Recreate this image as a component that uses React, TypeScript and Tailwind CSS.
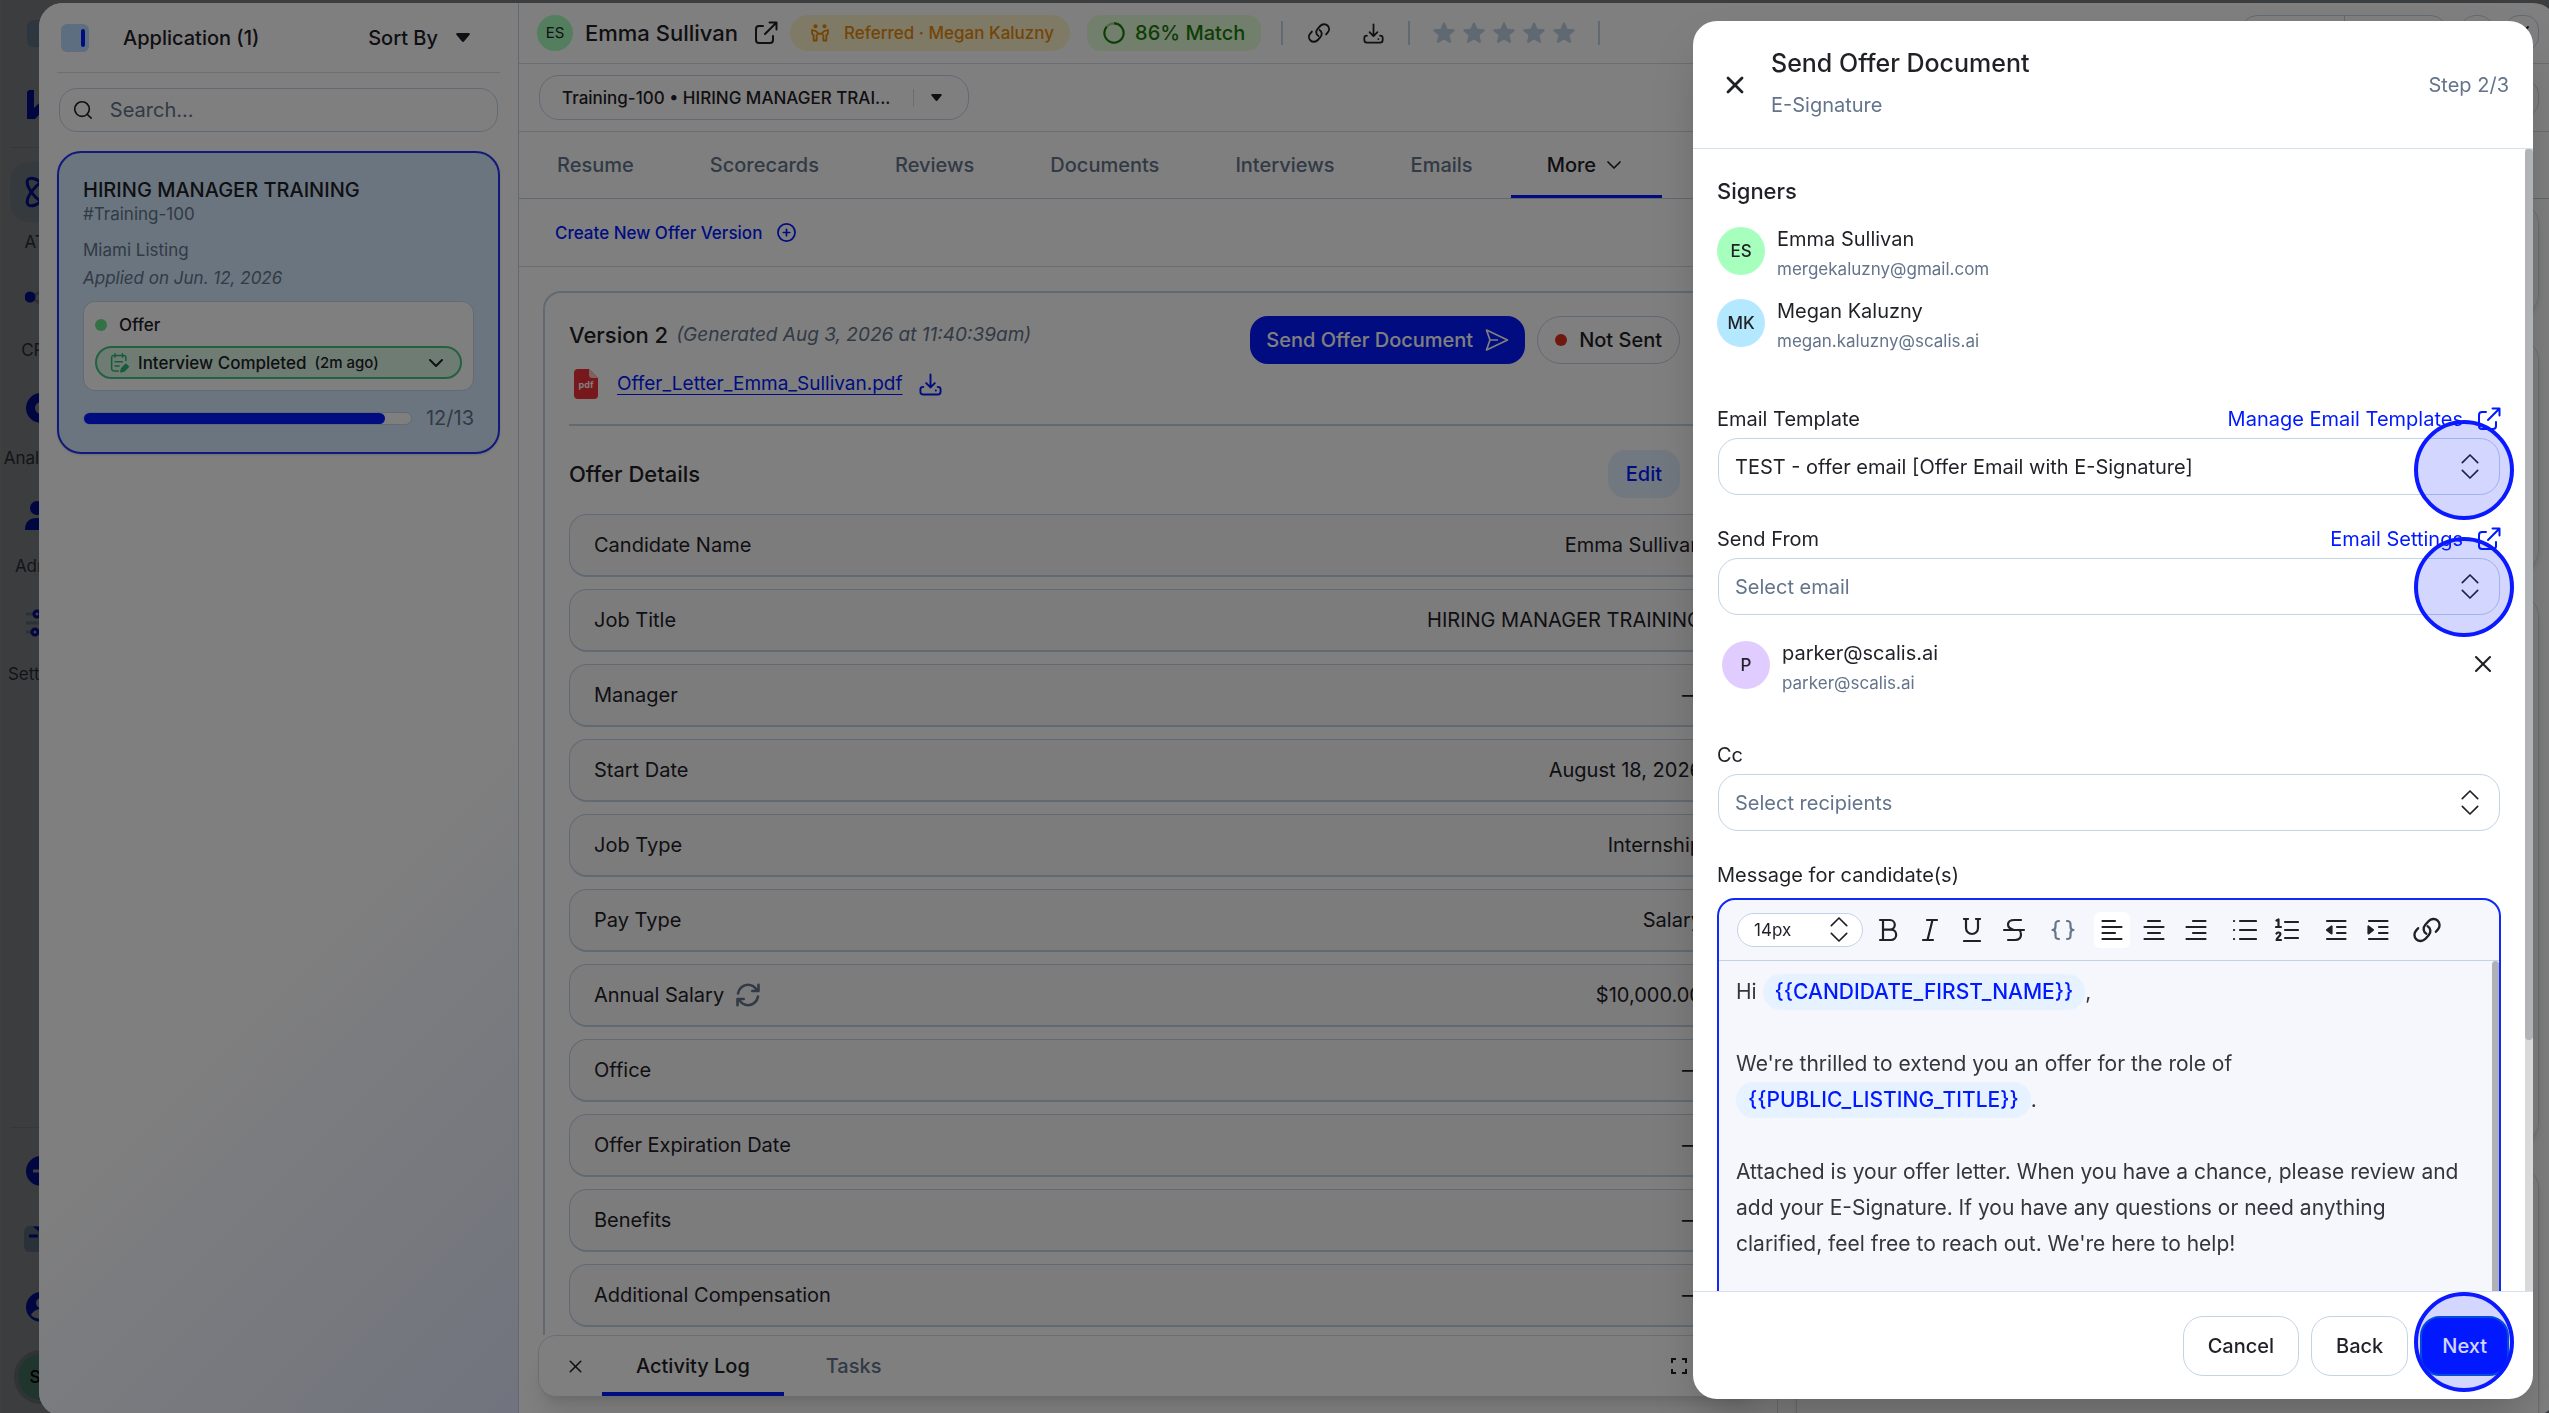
import React from "react";
import { ChevronDown, Search, X } from "lucide-react";

interface IconProps {
  className?: string;
}

interface Detail {
  label: string;
  value: string;
  synced?: boolean;
}

interface Person {
  initials: string;
  name: string;
  email: string;
  color: string;
}

const tabs = ["Resume", "Scorecards", "Reviews", "Documents", "Interviews", "Emails"];

const details: Detail[] = [
  { label: "Candidate Name", value: "Emma Sullivan" },
  { label: "Job Title", value: "HIRING MANAGER TRAINING" },
  { label: "Manager", value: "—" },
  { label: "Start Date", value: "August 18, 2026" },
  { label: "Job Type", value: "Internship" },
  { label: "Pay Type", value: "Salary" },
  { label: "Annual Salary", value: "$10,000.00", synced: true },
  { label: "Office", value: "—" },
  { label: "Offer Expiration Date", value: "—" },
  { label: "Benefits", value: "—" },
  { label: "Additional Compensation", value: "—" },
];

const signers: Person[] = [
  { initials: "ES", name: "Emma Sullivan", email: "mergekaluzny@gmail.com", color: "bg-[#a7ffbe]" },
  { initials: "MK", name: "Megan Kaluzny", email: "megan.kaluzny@scalis.ai", color: "bg-[#b3e8ff]" },
];

/* ---------- icons ---------- */

const ExternalIcon: React.FC<IconProps> = ({ className }) => (
  <svg viewBox="0 0 24 24" fill="none" stroke="currentColor" strokeWidth="2" strokeLinecap="round" strokeLinejoin="round" className={className}>
    <path d="M15.500 1.500h7v7M22.500 1.500 11 13M9 5H5a3 3 0 0 0-3 3v11a3 3 0 0 0 3 3h11a3 3 0 0 0 3-3v-4" />
  </svg>
);

const ChainIcon: React.FC<IconProps> = ({ className }) => (
  <svg viewBox="0 0 24 24" fill="none" stroke="currentColor" strokeWidth="1.900" strokeLinecap="round" strokeLinejoin="round" className={className}>
    <path d="M11.500 15c-2.400-1.300-3-4.700-1-7l2.700-3c2-2.200 5.300-2.400 7.300-.5s2.100 5 .1 7.200l-1.500 1.700" />
    <path d="M12.500 9c2.400 1.300 3 4.700 1 7l-2.700 3c-2 2.200-5.300 2.400-7.300.5s-2.100-5-.1-7.200l1.500-1.700" />
  </svg>
);

const DownloadIcon: React.FC<IconProps> = ({ className }) => (
  <svg viewBox="0 0 24 24" fill="none" stroke="currentColor" strokeWidth="2" strokeLinecap="round" strokeLinejoin="round" className={className}>
    <path d="M12 1.500v13.500M7.500 10.500 12 15l4.500-4.500M4.500 14.500C2.500 14.500 1.500 15.500 1.500 17v2.500c0 2 1 3 3 3h15c2 0 3-1 3-3V17c0-1.500-1-2.500-3-2.500M17.500 18.300h.1" />
  </svg>
);

const StarIcon: React.FC<IconProps> = ({ className }) => (
  <svg viewBox="0 0 24 24" fill="currentColor" className={className}>
    <path d="M12 1.200c.4 0 .8.300 1 .7l2.400 5.900 6.300.5c1 .1 1.400 1.200.6 1.900l-4.800 4.100 1.500 6.300c.2.900-.8 1.600-1.600 1.200L12 18.400l-5.400 3.400c-.8.400-1.800-.3-1.600-1.200l1.500-6.300-4.800-4.100c-.8-.7-.4-1.800.6-1.900l6.300-.5L11 1.900c.2-.4.6-.7 1-.7z" />
  </svg>
);

const CaretIcon: React.FC<IconProps> = ({ className }) => (
  <svg viewBox="0 0 14 9" fill="currentColor" className={className}>
    <path d="M1.500 0h11c1.200 0 1.700 1.200.9 2L8.200 8.300a1.600 1.600 0 0 1-2.400 0L.6 2C-.2 1.200.300 0 1.500 0z" />
  </svg>
);

const SelectorIcon: React.FC<IconProps> = ({ className }) => (
  <svg viewBox="0 0 18 26" fill="none" stroke="currentColor" strokeWidth="1.700" strokeLinecap="round" strokeLinejoin="round" className={className}>
    <path d="m1 9 8-8 8 8M1 17l8 8 8-8" />
  </svg>
);

const SendIcon: React.FC<IconProps> = ({ className }) => (
  <svg viewBox="0 0 24 24" fill="none" stroke="currentColor" strokeWidth="1.700" strokeLinejoin="round" className={className}>
    <path d="M1.500 2 22.500 12 1.500 22 5 12zM5 12h8" />
  </svg>
);

const SyncIcon: React.FC<IconProps> = ({ className }) => (
  <svg viewBox="0 0 24 24" fill="none" stroke="currentColor" strokeWidth="2.600" strokeLinecap="round" strokeLinejoin="round" className={className}>
    <path d="M2 10.500C2.800 5.500 7 1.800 12 1.800c4 0 7 2.200 9 5.500M22.500 1.800v6.200h-6.200M22 13.500c-.8 5-5 8.700-10 8.700-4 0-7-2.200-9-5.500M1.500 22.200V16h6.200" />
  </svg>
);

const ReferIcon: React.FC<IconProps> = ({ className }) => (
  <svg viewBox="0 0 24 24" fill="none" stroke="currentColor" strokeWidth="2.400" strokeLinecap="round" strokeLinejoin="round" className={className}>
    <circle cx="6" cy="3" r="1.600" fill="currentColor" />
    <circle cx="18" cy="3" r="1.600" fill="currentColor" />
    <path d="M1.500 8v5l2 2v7h4v-7M1.500 8l5 1.500L9 12M22.500 8v5l-2 2v7h-4v-7M22.500 8l-5 1.500L15 12M9 13h6" />
  </svg>
);

const CalendarEditIcon: React.FC<IconProps> = ({ className }) => (
  <svg viewBox="0 0 24 24" fill="none" stroke="currentColor" strokeWidth="1.800" strokeLinecap="round" strokeLinejoin="round" className={className}>
    <path d="M10 21.500H4.500a2.500 2.500 0 0 1-2.500-2.500V5.500A2.500 2.500 0 0 1 4.500 3h12A2.500 2.500 0 0 1 19 5.500V9M6 1v4M15 1v4M6 10.500h9M6 15.500h5" />
    <path d="m13 22.500 1-4 5-5 3 3-5 5z" fill="currentColor" />
  </svg>
);

const PdfIcon: React.FC<IconProps> = ({ className }) => (
  <svg viewBox="0 0 24 30" className={className}>
    <path d="M4 0h11l9 9v17a4 4 0 0 1-4 4H4a4 4 0 0 1-4-4V4a4 4 0 0 1 4-4z" fill="#ef3038" />
    <path d="M15 0v6a3 3 0 0 0 3 3h6z" fill="#ffc2c4" />
    <text x="12" y="19" textAnchor="middle" fontSize="9" fontWeight="700" fontFamily="Inter, sans-serif" fill="#fff">pdf</text>
  </svg>
);

const FullscreenIcon: React.FC<IconProps> = ({ className }) => (
  <svg viewBox="0 0 16 16" fill="none" stroke="currentColor" strokeWidth="2" className={className}>
    <path d="M1 5V1h4M11 1h4v4M15 11v4h-4M5 15H1v-4" />
  </svg>
);

/* toolbar glyphs share a 24px box */
const ToolIcon: React.FC<{ children: React.ReactNode; className?: string }> = ({ children, className }) => (
  <svg viewBox="0 0 24 24" fill="none" stroke="currentColor" strokeWidth="2.200" strokeLinecap="round" strokeLinejoin="round" className={className}>
    {children}
  </svg>
);

const toolGroups: { name: string; icon: React.ReactNode; active?: boolean; muted?: boolean }[][] = [
  [
    { name: "Bold", icon: <path d="M4 2h10a4.800 4.800 0 0 1 0 9.600H7M7 2v20M4 22h11a5.200 5.200 0 0 0 0-10.400" /> },
    { name: "Italic", icon: <path d="M9 2h10M5 22h10M14.500 2l-5 20" /> },
    { name: "Underline", icon: <path d="M4 1h4M16 1h4M6 1v9a6 6 0 0 0 12 0V1M4 23h16" /> },
    { name: "Strikethrough", icon: <path d="M19 2h-6.500C8.500 2 6 3.500 6 6.500S8.500 11 12 12M2 12h20M17.500 12c1 1 1.500 2.500 1.500 4.500 0 3.500-2 5.500-6 5.500H6" /> },
  ],
  [
    { name: "Insert variable", muted: true, icon: <path d="M8 3c-3 0-3.500 1-3.500 3.500v2C4.500 10.500 3.500 12 1.500 12c2 0 3 1.500 3 3.500v2C4.500 20 5 21 8 21M16 3c3 0 3.500 1 3.500 3.500v2c0 2 1 3.500 3 3.500-2 0-3 1.500-3 3.500v2c0 2.500-.5 3.500-3.500 3.500" /> },
  ],
  [
    { name: "Align left", active: true, icon: <path d="M2.500 3H15M2.500 9h19M2.500 15H15M2.500 21h19" /> },
    { name: "Align center", icon: <path d="M6 3h12M2.500 9h19M6 15h12M2.500 21h19" /> },
    { name: "Align right", icon: <path d="M9 3h12.500M2.500 9h19M9 15h12.500M2.500 21h19" /> },
  ],
  [
    { name: "Bulleted list", icon: <path d="M7 3h16M7 12h16M7 21h16M1 3h.1M1 12h.1M1 21h.1" /> },
    { name: "Numbered list", icon: <path d="M10 4h13M10 12h13M10 20h13M1.500 2.500l2-1V9M1 9h5M1.500 15.500c1-1.500 4-1.300 4 .5 0 2-4 4-4 6H6" /> },
  ],
  [
    { name: "Outdent", icon: <><path d="M3 3h18.500M13 9h8.500M13 15h8.500M3 21h18.500" /><path d="M7.500 8.500v7L3 12z" fill="currentColor" /></> },
    { name: "Indent", icon: <><path d="M3 3h18.500M13 9h8.500M13 15h8.500M3 21h18.500" /><path d="M2.500 8.500v7L7 12z" fill="currentColor" /></> },
  ],
];

/* ---------- shared bits ---------- */

const PersonRow: React.FC<{ person: Person }> = ({ person }) => (
  <div className="flex items-start gap-3">
    <span className={`${person.color} flex size-12 items-center justify-center rounded-full text-[17px] font-medium`}>
      {person.initials}
    </span>
    <div className="flex flex-col gap-[6px] leading-6">
      <span>{person.name}</span>
      <span className="text-[17px] text-[#64748b]">{person.email}</span>
    </div>
  </div>
);

const ClickRing: React.FC<IconProps> = ({ className }) => (
  <span className={`pointer-events-none absolute size-[100px] rounded-full border-4 border-[#0a19ff] bg-[#0a19ff]/18 ${className}`} />
);

interface FieldProps {
  id: string;
  label: string;
  value: string;
  link?: string;
  filled?: boolean;
  ring?: string;
}

const SelectField: React.FC<FieldProps> = ({ id, label, value, link, filled, ring }) => (
  <div>
    <div className="flex h-6 items-center justify-between">
      <label htmlFor={id}>{label}</label>
      {link && (
        <a href="#" className="flex items-center gap-[14px] text-[#0019ff]">
          {link}
          <ExternalIcon className="size-6" />
        </a>
      )}
    </div>
    <div className="relative mx-px mt-[7px]">
      <select
        id={id}
        className={`h-[57px] w-full appearance-none rounded-[20px] border border-[#c3d3e6] bg-white px-4 ${filled ? "text-[#1f2126]" : "text-[#64748b]"}`}
      >
        <option>{value}</option>
      </select>
      <SelectorIcon className="pointer-events-none absolute top-4 right-[21px] h-[25px] w-[18px]" />
      {ring && <ClickRing className={ring} />}
    </div>
  </div>
);

/* ---------- left rail ---------- */

const railItems: { label: string; icon: React.ReactNode; active?: boolean }[] = [
  {
    label: "ATS",
    active: true,
    icon: (
      <g fill="none" stroke="#0019ff" strokeWidth="3">
        <ellipse cx="16" cy="16" rx="18" ry="7.500" transform="rotate(45 16 16)" />
        <ellipse cx="16" cy="16" rx="18" ry="7.500" transform="rotate(-45 16 16)" />
      </g>
    ),
  },
  {
    label: "CRM",
    icon: <><path d="M5 13 28 2M5 13l23 14" stroke="#a9c4e0" strokeWidth="3" /><circle cx="5" cy="13" r="5.500" fill="#0019ff" /></>,
  },
  { label: "Analytics", icon: <circle cx="16" cy="16" r="10.500" fill="none" stroke="#0019ff" strokeWidth="9" /> },
  {
    label: "Admin",
    icon: <><circle cx="12" cy="8" r="7" fill="#0019ff" /><path d="M0 30c0-8 4-12 12-12s12 4 12 12z" fill="#0019ff" /></>,
  },
  {
    label: "Settings",
    icon: <><path d="M1 6h30M1 15h30M1 24h30" stroke="#a9c4e0" strokeWidth="3" /><circle cx="12" cy="6" r="3" fill="#fff" stroke="#0019ff" strokeWidth="3" /><circle cx="10" cy="24" r="3" fill="#fff" stroke="#0019ff" strokeWidth="3" /></>,
  },
];

const Rail: React.FC = () => (
  <nav className="flex h-full w-20 flex-col items-center border-l border-white bg-[#f3f5fb] text-[17px] text-[#4b5563]">
    <span className="mt-5 size-[27px] rounded-md bg-[#b8dcff]" />
    <svg viewBox="0 0 28 30" className="mt-[43px] h-[30px] w-7">
      <path d="M2 0h5v18L26 0v10L8 29H0V2z" fill="#0019ff" />
    </svg>
    <div className="mt-[27px] h-px w-[62px] bg-[#d5e1ef]" />
    <ul className="mt-[14px] flex flex-col gap-6">
      {railItems.map((item) => (
        <li key={item.label} className="flex h-[84px] flex-col items-center">
          <span className={`flex h-[60px] w-[62px] shrink-0 items-center justify-center rounded-[20px] ${item.active ? "bg-[#d5e8fb]" : ""}`}>
            <svg viewBox="0 0 32 32" className="size-8">{item.icon}</svg>
          </span>
          <span className="mt-2 leading-6">{item.label}</span>
        </li>
      ))}
    </ul>
    <div className="mt-auto h-px w-[62px] bg-[#d5e1ef]" />
    <svg viewBox="0 0 32 32" className="mt-[27px] size-8">
      <circle cx="16" cy="16" r="15" fill="#0019ff" />
      <path d="M8 16h16M16 8v16" stroke="#fff" strokeWidth="3" />
    </svg>
    <svg viewBox="0 0 34 26" className="mt-[39px] h-[26px] w-[34px]">
      <rect width="34" height="26" rx="6" fill="#a9c4e0" />
      <path d="M5 10h9M13 2h16v4H18z" fill="#0019ff" stroke="#0019ff" strokeWidth="3" />
    </svg>
    <svg viewBox="0 0 32 32" className="mt-[39px] size-8">
      <circle cx="16" cy="16" r="15" fill="#0019ff" />
      <circle cx="16" cy="12" r="5" fill="#fff" />
      <path d="M6 24c4-8 16-8 20 0-4 5-16 5-20 0z" fill="#fff" />
    </svg>
    <span className="mt-[27px] mb-[9px] flex size-[54px] items-center justify-center rounded-full border-4 border-[#c9cdd5] bg-[#7fd6b8] font-medium text-black">
      SP
    </span>
  </nav>
);

/* ---------- application list ---------- */

const ApplicationList: React.FC = () => (
  <aside className="w-[480px] shrink-0 border-r border-[#c3d3e6] bg-[linear-gradient(135deg,#fff_62%,#e2e8fc_100%)] px-[18px]">
    <div className="flex h-[70px] items-center border-b border-[#d5e1ef] pr-[30px] pl-1">
      <button aria-label="Collapse list" className="flex size-7 items-center justify-end rounded-md bg-[#b8dcff] pr-1">
        <span className="h-[18px] w-1 rounded-full bg-[#0019ff]" />
      </button>
      <h2 className="ml-[34px] font-medium">Application (1)</h2>
      <button className="ml-auto flex items-center gap-[18px] font-medium">
        Sort By
        <CaretIcon className="h-[9px] w-[14px]" />
      </button>
    </div>

    <label className="mx-[2px] mt-[15px] flex h-11 items-center gap-4 rounded-[18px] border border-[#c3d3e6] pl-3">
      <Search className="size-6" strokeWidth={1.8} />
      <input
        type="search"
        aria-label="Search applications"
        placeholder="Search..."
        className="w-full bg-transparent outline-none placeholder:text-[#64748b]"
      />
    </label>

    <article className="mt-[19px] h-[303px] rounded-3xl border-2 border-[#1e35f5] bg-[#d5ebff] px-6 pt-[25px] shadow-sm">
      <h3 className="leading-6 font-medium">HIRING MANAGER TRAINING</h3>
      <p className="text-[17px] leading-6 text-[#64748b]">#Training-100</p>
      <p className="mt-3 text-[17px] leading-6 text-[#64748b]">Miami Listing</p>
      <p className="mt-1 text-[17px] leading-6 text-[#64748b] italic">Applied on Jun. 12, 2026</p>

      <div className="mt-[11px] rounded-xl border border-[#c9d3e4] bg-white p-[11px] text-[17px] font-medium">
        <div className="flex items-center gap-3 leading-6">
          <span className="size-3 rounded-full bg-[#66e38c]" />
          Offer
        </div>
        <button className="mt-[9px] flex h-[33px] w-full items-center rounded-full border-2 border-[#45c583] bg-[#dcf9e7] pr-3 pl-[13px]">
          <CalendarEditIcon className="mr-2 size-5 text-[#2eb872]" />
          Interview Completed
          <span className="ml-2 text-[15px]">(2m ago)</span>
          <ChevronDown className="ml-auto size-6" />
        </button>
      </div>

      <div className="mt-[11px] flex items-center gap-[14px] text-[#64748b]">
        <div className="h-[13px] flex-1 rounded-full border border-[#c9d3e4] bg-white">
          <div className="h-full w-[92%] rounded-full bg-[#0019ff]" />
        </div>
        12/13
      </div>
    </article>
  </aside>
);

/* ---------- candidate profile ---------- */

const Divider = () => <span className="h-6 w-[2px] bg-[#c3d3e6]" />;

const ProfileHeader: React.FC = () => (
  <header>
    <div className="flex h-[61px] items-center border-b border-[#d5dde9] pr-[18px] pl-[18px]">
      <span className="flex size-9 items-center justify-center rounded-full bg-[#a7ffbe] text-[15px]">ES</span>
      <h1 className="ml-3 text-[22px] font-medium">Emma Sullivan</h1>
      <ExternalIcon className="ml-4 size-6" />
      <span className="ml-3 flex h-9 items-center gap-[15px] rounded-full bg-[#fff5cc] pr-4 pl-[21px] text-[17px] font-medium text-[#e8890c]">
        <ReferIcon className="size-[18px]" />
        Referred · Megan Kaluzny
      </span>
      <span className="ml-[17px] flex h-9 items-center gap-[10px] rounded-[14px] bg-[#e3ffd9] px-4 font-medium text-[#1c7a0c]">
        <svg viewBox="0 0 24 24" fill="none" stroke="currentColor" strokeWidth="2.200" className="size-[22px]">
          <circle cx="12" cy="12" r="10.500" opacity="0.350" />
          <path d="M12 1.500A10.500 10.500 0 1 1 4 5.200" />
        </svg>
        86% Match
      </span>
      <div className="ml-5 flex items-center gap-6">
        <Divider />
        <button aria-label="Copy link"><ChainIcon className="size-6" /></button>
        <button aria-label="Download" className="ml-2"><DownloadIcon className="size-[21px]" /></button>
        <Divider />
      </div>
      <div className="mx-[22px] flex gap-[6px] text-[#c0d0e3]">
        {[1, 2, 3, 4, 5].map((n) => (
          <StarIcon key={n} className="size-6" />
        ))}
      </div>
      <Divider />
      <div className="ml-auto flex h-9 w-[206px] divide-x divide-[#c3d3e6] rounded-[16px] border border-[#c3d3e6]">
        <span className="flex-1" />
        <span className="flex-1" />
      </div>
      <span className="ml-[14px] h-9 w-8 rounded-[14px] border border-[#c3d3e6]" />
      <button aria-label="Close profile" className="ml-3 flex h-9 w-[34px] items-center justify-center rounded-[14px] border border-[#c3d3e6]">
        <X className="size-6" />
      </button>
    </div>

    <div className="flex h-[68px] items-center justify-between border-b border-[#d5dde9] pr-[18px] pl-5">
      <button className="flex h-[45px] w-[430px] items-center rounded-[20px] border border-[#c3d3e6] pr-[26px] pl-[22px] text-[17px] font-medium">
        Training-100 • HIRING MANAGER TRAI...
        <span className="ml-auto h-[18px] w-px bg-[#d5dde9]" />
        <CaretIcon className="ml-[17px] h-[7px] w-[11px]" />
      </button>
      <span className="h-9 w-[200px] rounded-[14px] border border-[#c3d3e6]" />
    </div>

    <nav className="flex h-[67px] items-stretch border-b border-[#c3cfe0] font-medium text-[#64748b]">
      {tabs.map((tab) => (
        <button key={tab} className="px-[38px]">{tab}</button>
      ))}
      <button className="flex items-center gap-[6px] border-b-[3px] border-[#0019ff] px-9 pt-[3px] text-[#1f2126]">
        More
        <ChevronDown className="size-6" strokeWidth={1.7} />
      </button>
    </nav>
  </header>
);

const OfferVersion: React.FC = () => (
  <section className="rounded-[18px] border-2 border-[#c3d3e6] px-6 pt-[23px]">
    <div className="flex items-start justify-between pr-[47px]">
      <div>
        <div className="flex h-[38px] items-center gap-2">
          <h2 className="text-[22px] font-medium">Version 2</h2>
          <span className="text-[19px] text-[#64748b] italic">(Generated Aug 3, 2026 at 11:40:39am)</span>
        </div>
        <div className="mt-[14px] flex h-8 items-center pl-[5px] text-[#0019ff]">
          <PdfIcon className="h-[30px] w-6" />
          <a href="#" className="ml-[19px] text-[19px] underline underline-offset-4">Offer_Letter_Emma_Sullivan.pdf</a>
          <button aria-label="Download offer letter" className="ml-4"><DownloadIcon className="size-[23px]" /></button>
        </div>
      </div>
      <div className="flex gap-3">
        <button className="flex h-12 items-center gap-3 rounded-[18px] bg-[#0019ff] px-4 font-medium text-white">
          Send Offer Document
          <SendIcon className="size-6" />
        </button>
        <span className="flex h-12 items-center gap-3 rounded-full border border-[#c3d3e6] px-[17px] font-medium">
          <span className="size-3 rounded-full bg-[#e0301e]" />
          Not Sent
        </span>
      </div>
    </div>

    <hr className="mt-6 border-t-2 border-[#c3d3e6]" />

    <div className="mt-6 flex h-12 items-center justify-between pr-[47px]">
      <h2 className="text-[22px] font-medium">Offer Details</h2>
      <button className="h-12 rounded-[18px] bg-[#e3f1ff] px-[18px] font-medium text-[#0019ff]">Edit</button>
    </div>

    <dl className="mt-4 flex flex-col gap-3 pb-6">
      {details.map((item) => (
        <div key={item.label} className="flex h-[63px] items-center justify-between rounded-[18px] border border-b-2 border-[#c3d3e6] bg-[#f8f8fb] px-6">
          <dt className="flex items-center gap-3">
            {item.label}
            {item.synced && <SyncIcon className="size-6 text-[#64748b]" />}
          </dt>
          <dd>{item.value}</dd>
        </div>
      ))}
    </dl>
  </section>
);

const Profile: React.FC = () => (
  <div className="flex min-w-0 flex-1 flex-col">
    <ProfileHeader />
    <div className="flex min-h-0 flex-1">
      <main className="flex min-w-0 flex-1 flex-col">
        <div className="flex h-[68px] shrink-0 items-center border-b border-[#d5dde9] pl-9">
          <button className="flex items-center gap-[15px] text-[17px] font-medium text-[#0019ff]">
            Create New Offer Version
            <svg viewBox="0 0 24 24" fill="none" stroke="currentColor" strokeWidth="2.200" strokeLinecap="round" className="size-[19px]">
              <circle cx="12" cy="12" r="10.800" />
              <path d="M12 8v8M8 12h8" />
            </svg>
          </button>
        </div>
        <div className="min-h-0 flex-1 overflow-hidden px-6 pt-6">
          <OfferVersion />
        </div>
        <div className="mx-[19px] mb-[19px] flex h-[62px] shrink-0 items-stretch rounded-[18px] border border-[#d5dde9] bg-white pr-[70px] pl-[26px] font-medium shadow-xl">
          <button aria-label="Close activity log"><X className="size-[21px]" strokeWidth={1.8} /></button>
          <button className="ml-4 border-b-4 border-[#0019ff] px-[34px] pt-1">Activity Log</button>
          <button className="ml-2 px-[34px] text-[#64748b]">Tasks</button>
          <button aria-label="Full screen" className="ml-auto"><FullscreenIcon className="size-4" /></button>
        </div>
      </main>
      <aside className="flex w-[780px] shrink-0 flex-col gap-7 overflow-hidden border-l border-[#d5dde9] px-[18px] pt-[6px]">
        <div className="h-[108px] shrink-0 rounded-[18px] border border-[#d5dde9] shadow-md" />
        <div className="h-[228px] shrink-0 rounded-[18px] border border-[#d5dde9] shadow-md" />
        <div className="h-[544px] shrink-0 rounded-[18px] border border-[#d5dde9] shadow-md" />
        <div className="h-[300px] shrink-0 rounded-[18px] border border-[#d5dde9] shadow-md" />
      </aside>
    </div>
  </div>
);

/* ---------- send offer drawer ---------- */

const Chip: React.FC<{ children: React.ReactNode }> = ({ children }) => (
  <span className="inline-block rounded-full bg-[#e6f2ff] px-3 font-medium text-[#0019ff]">{children}</span>
);

const MessageEditor: React.FC = () => (
  <div className="mt-[11px] h-[560px] overflow-hidden rounded-[18px] border-2 border-[#0f2bf5] bg-[#f5f7fc]">
    <div className="flex h-[61px] items-center gap-[7px] border-b border-[#c3d3e6] pl-[18px]">
      <div className="relative">
        <select aria-label="Font size" className="h-[34px] w-[126px] appearance-none rounded-full border border-[#c3d3e6] bg-white pl-4 text-[17px]">
          <option>14px</option>
        </select>
        <SelectorIcon className="pointer-events-none absolute top-1 right-[15px] h-[25px] w-[18px]" />
      </div>
      <div className="flex gap-[13px]">
        {toolGroups.map((group, index) => (
          <div key={index} className="flex gap-[6px]">
            {group.map((tool) => (
              <button
                key={tool.name}
                aria-label={tool.name}
                className={`flex size-9 items-center justify-center rounded-md ${tool.active ? "bg-white" : ""} ${tool.muted ? "text-[#64748b]" : ""}`}
              >
                <ToolIcon className="size-6">{tool.icon}</ToolIcon>
              </button>
            ))}
          </div>
        ))}
        <button aria-label="Insert link" className="flex size-9 items-center justify-center">
          <ChainIcon className="size-[30px]" />
        </button>
      </div>
    </div>
    <div className="flex h-[497px] justify-between">
      <div
        id="message"
        role="textbox"
        aria-multiline="true"
        aria-labelledby="message-label"
        className="flex-1 pt-[13px] pr-6 pl-[17px] text-[21px] leading-9 text-[#33363d]"
      >
        <p>Hi <Chip>{"{{CANDIDATE_FIRST_NAME}}"}</Chip>,</p>
        <p className="mt-9">
          We're thrilled to extend you an offer for the role of <br />
          <Chip>{"{{PUBLIC_LISTING_TITLE}}"}</Chip>.
        </p>
        <p className="mt-9">
          Attached is your offer letter. When you have a chance, please review and add your E-Signature. If you have any
          questions or need anything clarified, feel free to reach out. We're here to help!
        </p>
      </div>
      <div className="w-[7px] rounded-t-full bg-[#b0b1b6]" />
    </div>
  </div>
);

const SendOfferDrawer: React.FC = () => (
  <div
    role="dialog"
    aria-labelledby="drawer-title"
    className="fixed top-[21px] right-4 bottom-[14px] flex w-[840px] flex-col rounded-3xl bg-white shadow-2xl"
  >
    <div className="flex h-32 shrink-0 items-center border-b border-[#d5e1ef] pr-6 pl-7">
      <button aria-label="Close"><X className="size-7" strokeWidth={2.4} /></button>
      <div className="mb-1 ml-[22px]">
        <h2 id="drawer-title" className="text-[25px] leading-9 font-medium">Send Offer Document</h2>
        <p className="mt-2 leading-8 text-[#64748b]">E-Signature</p>
      </div>
      <span className="ml-auto text-[#64748b]">Step 2/3</span>
    </div>

    <div className="relative min-h-0 flex-1 overflow-hidden pt-[26px] pr-8 pl-6">
      <h3 className="text-[22px] leading-8 font-medium">Signers</h3>
      <div className="mt-5 mb-[54px] flex flex-col gap-[18px]">
        {signers.map((person) => (
          <PersonRow key={person.initials} person={person} />
        ))}
      </div>

      <div className="flex flex-col gap-8">
        <SelectField
          id="template"
          label="Email Template"
          value="TEST - offer email [Offer Email with E-Signature]"
          link="Manage Email Templates"
          filled
          ring="-top-[18px] -right-[14px]"
        />
        <SelectField id="from" label="Send From" value="Select email" link="Email Settings" ring="-top-[21px] -right-[14px]" />
      </div>

      <div className="mt-[26px] mb-12 flex items-start justify-between pr-1 pl-[5px]">
        <PersonRow person={{ initials: "P", name: "parker@scalis.ai", email: "parker@scalis.ai", color: "bg-[#e0ccff]" }} />
        <button aria-label="Remove parker@scalis.ai" className="mt-[9px]"><X className="size-7" strokeWidth={1.8} /></button>
      </div>

      <SelectField id="cc" label="Cc" value="Select recipients" />

      <p id="message-label" className="mt-8 leading-6">Message for candidate(s)</p>
      <MessageEditor />

      {/* scroll track */}
      <div className="absolute inset-y-0 right-0 w-2 bg-[#d9d9da]">
        <div className="h-[78%] rounded-full bg-[#b2b3b6]" />
      </div>
    </div>

    <div className="flex h-[108px] shrink-0 items-start justify-end gap-3 border-t border-[#d5e1ef] pt-6 pr-6 font-medium">
      <button className="h-[60px] rounded-[20px] border border-[#c3d3e6] px-6">Cancel</button>
      <button className="h-[60px] rounded-[20px] border border-[#c3d3e6] px-6">Back</button>
      <div className="relative">
        <button className="h-[60px] rounded-[20px] border-2 border-[#0056d6] bg-[#0019ff] px-5 text-white">Next</button>
        <ClickRing className="-top-6 -right-[5px]" />
      </div>
    </div>
  </div>
);

const App: React.FC = () => (
  <div className="relative h-screen overflow-hidden bg-[#f3f5fb] font-['Inter',sans-serif] text-xl leading-8 text-[#1f2126]">
    <Rail />
    <div className="absolute inset-0 bg-black/50" />
    <div className="absolute top-[3px] -right-2 -bottom-[3px] left-[39px] flex overflow-hidden rounded-3xl bg-white">
      <ApplicationList />
      <Profile />
    </div>
    <div className="absolute inset-0 bg-black/50" />
    <SendOfferDrawer />
  </div>
);

export default App;
